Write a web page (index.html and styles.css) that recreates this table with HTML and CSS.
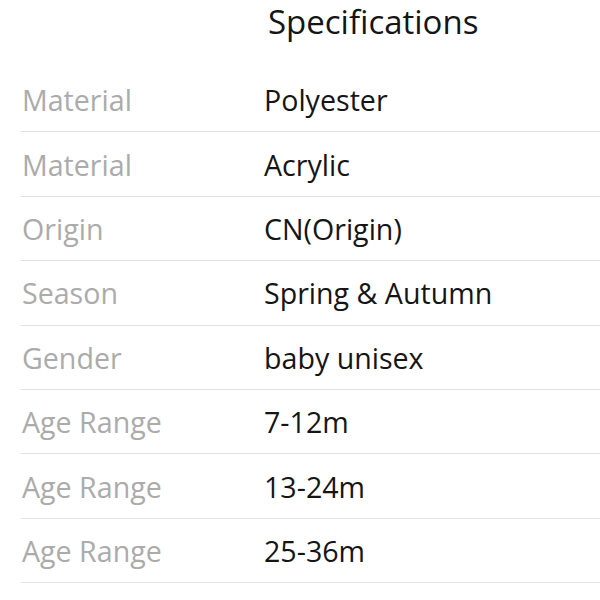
FILE: index.html
```html
<!DOCTYPE html>
<html>
<head>
<meta charset="utf-8">
<link rel="stylesheet" href="styles.css">
</head>
<body>
<div class="spec">
  <h1 class="title">Specifications</h1>
  <div class="rows">
    <div class="row"><span class="label">Material</span><span class="value">Polyester</span></div>
    <div class="row"><span class="label">Material</span><span class="value">Acrylic</span></div>
    <div class="row"><span class="label">Origin</span><span class="value">CN(Origin)</span></div>
    <div class="row"><span class="label">Season</span><span class="value">Spring &amp; Autumn</span></div>
    <div class="row"><span class="label">Gender</span><span class="value">baby unisex</span></div>
    <div class="row"><span class="label">Age Range</span><span class="value">7-12m</span></div>
    <div class="row"><span class="label">Age Range</span><span class="value">13-24m</span></div>
    <div class="row"><span class="label">Age Range</span><span class="value">25-36m</span></div>
  </div>
</div>
</body>
</html>
```
FILE: styles.css
```css
html, body {
  margin: 0;
  padding: 0;
  background: #fff;
}
body {
  font-family: "Open Sans", "DejaVu Sans", sans-serif;
  width: 600px;
  height: 600px;
  overflow: hidden;
}
.title {
  margin: 0;
  padding-left: 268px;
  height: 44px;
  line-height: 44px;
  font-size: 33px;
  font-weight: 400;
  color: #151515;
}
.rows {
  margin-left: 21px;
  margin-top: 24px;
}
.row {
  display: grid;
  grid-template-columns: 243px 1fr;
  height: 63.4px;
  align-items: center;
  border-bottom: 1px solid #e3e3e3;
  font-size: 28.6px;
}
.label {
  color: #ababab;
  padding-left: 1px;
}
.value {
  color: #151515;
}
```
